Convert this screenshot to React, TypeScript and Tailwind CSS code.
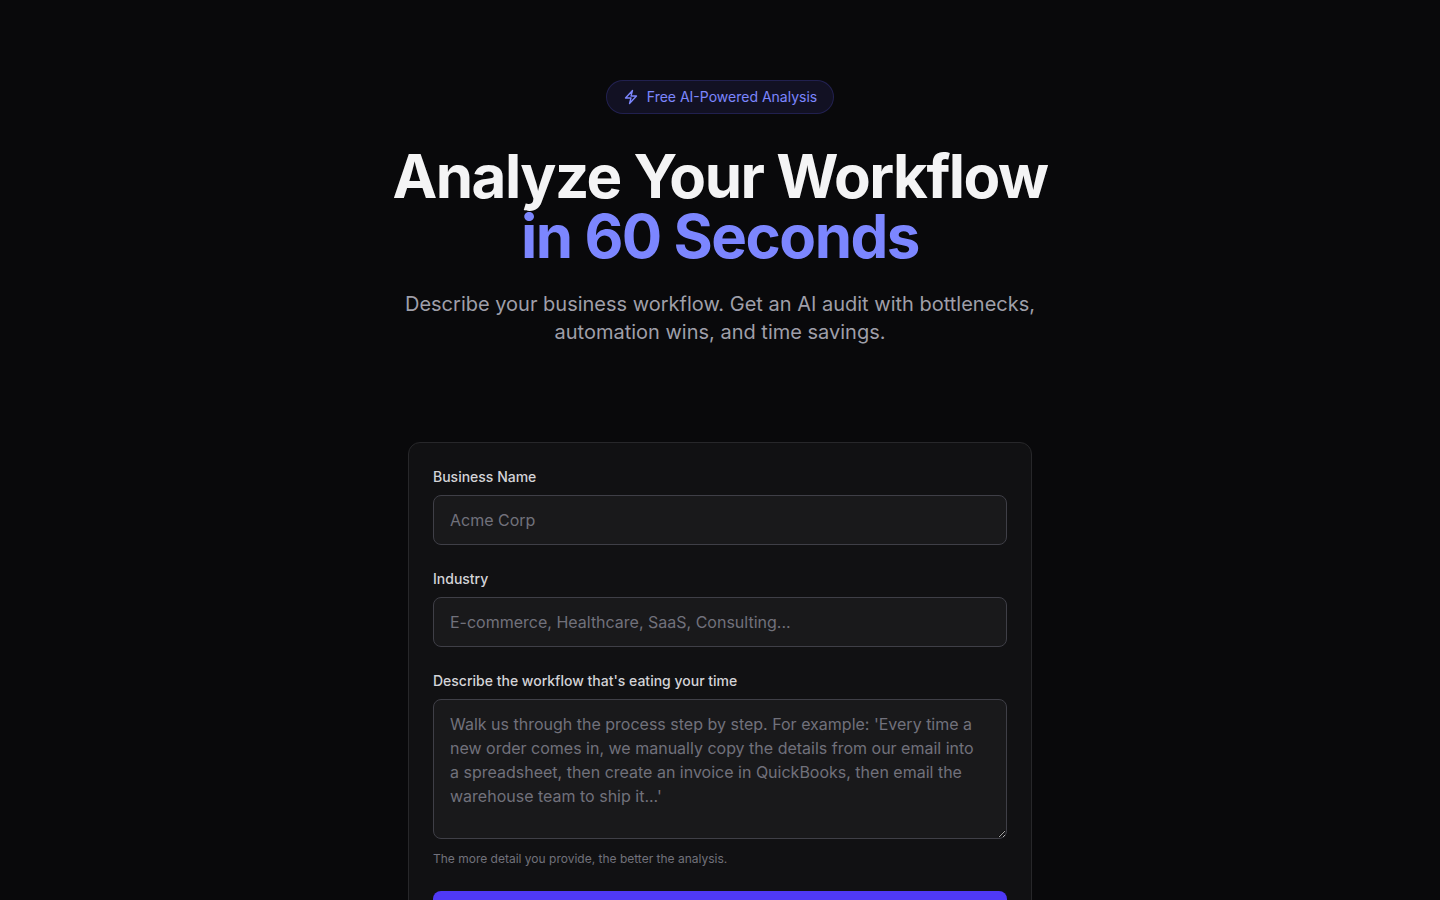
import { useState } from "react";

const LABEL = "block text-sm font-medium text-zinc-300 mb-2";
const FIELD =
  "block w-full rounded-lg border border-zinc-700 bg-[#19191b] pl-4 pr-5 py-3 text-base text-zinc-100 placeholder-zinc-500 focus:outline-none focus:border-indigo-500";

function BoltIcon() {
  return (
    <svg
      className="w-4 h-4"
      fill="none"
      viewBox="0 0 24 24"
      stroke="currentColor"
      strokeWidth={2}
      aria-hidden="true"
    >
      <path
        strokeLinecap="round"
        strokeLinejoin="round"
        d="M3.75 13.5l10.5-11.25L12 10.5h8.25L9.75 21.75 12 13.5H3.75z"
      />
    </svg>
  );
}

function AuditForm() {
  const [form, setForm] = useState({ business: "", industry: "", workflow: "" });

  return (
    <form
      onSubmit={(e) => e.preventDefault()}
      className="rounded-xl border border-zinc-800 bg-[#111113] p-6 space-y-6"
    >
      <div>
        <label htmlFor="business" className={LABEL}>
          Business Name
        </label>
        <input
          id="business"
          type="text"
          placeholder="Acme Corp"
          value={form.business}
          onChange={(e) => setForm({ ...form, business: e.target.value })}
          className={FIELD}
        />
      </div>

      <div>
        <label htmlFor="industry" className={LABEL}>
          Industry
        </label>
        <input
          id="industry"
          type="text"
          placeholder="E-commerce, Healthcare, SaaS, Consulting..."
          value={form.industry}
          onChange={(e) => setForm({ ...form, industry: e.target.value })}
          className={FIELD}
        />
      </div>

      <div>
        <label htmlFor="workflow" className={LABEL}>
          Describe the workflow that's eating your time
        </label>
        <textarea
          id="workflow"
          placeholder="Walk us through the process step by step. For example: 'Every time a new order comes in, we manually copy the details from our email into a spreadsheet, then create an invoice in QuickBooks, then email the warehouse team to ship it...'"
          value={form.workflow}
          onChange={(e) => setForm({ ...form, workflow: e.target.value })}
          className={`${FIELD} min-h-[140px] resize-y`}
        />
        <p className="mt-3 text-xs text-zinc-500">
          The more detail you provide, the better the analysis.
        </p>
      </div>

      {/* Submit */}
      <button
        type="submit"
        aria-label="Analyze"
        className="block w-full h-14 rounded-lg bg-indigo-600 hover:bg-indigo-500 transition-colors"
      />
    </form>
  );
}

export default function App() {
  return (
    <main className="min-h-screen bg-[#09090b] font-['Inter',sans-serif] text-zinc-100">
      {/* Hero */}
      <section className="px-6 pt-20 pb-12 text-center">
        <div className="max-w-3xl mx-auto">
          <div className="inline-flex items-center gap-2 px-4 py-1.5 mb-8 rounded-full border border-indigo-500/20 bg-indigo-500/10 text-sm text-indigo-400">
            <BoltIcon />
            Free AI-Powered Analysis
          </div>
          <h1 className="text-6xl font-bold tracking-tight mb-6">
            Analyze Your Workflow
            <span className="block text-indigo-400">in 60 Seconds</span>
          </h1>
          <p className="max-w-2xl mx-auto text-xl text-zinc-400">
            Describe your business workflow. Get an AI audit with bottlenecks, automation wins, and
            time savings.
          </p>
        </div>
      </section>

      {/* Form card */}
      <section className="px-6 pt-12 pb-20">
        <div className="max-w-[624px] mx-auto">
          <AuditForm />
        </div>
      </section>
    </main>
  );
}
